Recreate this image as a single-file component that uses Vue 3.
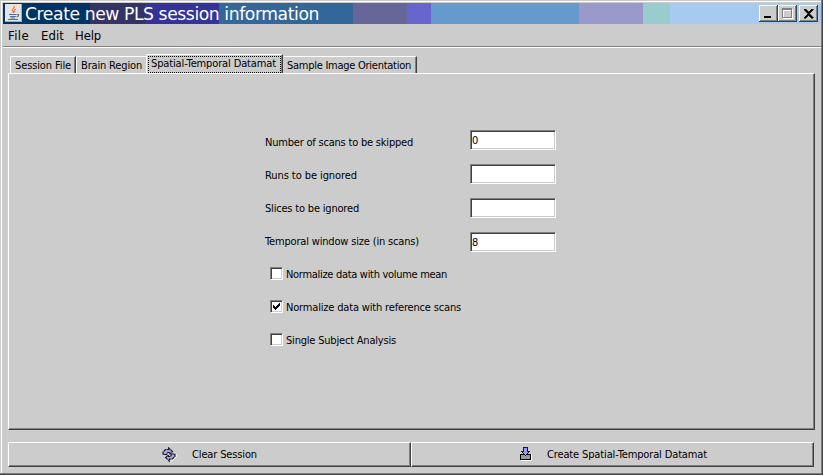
<script setup>
import { ref } from 'vue'

// Tracks a label out (or in) so that it fills the given width in pixels.
const vFit = {
  mounted(el, { value }) {
    const natural = el.getBoundingClientRect().width
    const count = el.textContent.length
    el.style.letterSpacing = `${(value - natural) / count}px`
  },
}

const menus = [
  { text: 'File', width: 21, cls: 'm-file' },
  { text: 'Edit', width: 23, cls: 'm-edit' },
  { text: 'Help', width: 26, cls: 'm-help' },
]
const tabs = [
  { text: 'Session File', width: 56, cls: 't-session' },
  { text: 'Brain Region', width: 61, cls: 't-brain' },
  { text: 'Spatial-Temporal Datamat', width: 125, cls: 't-datamat active' },
  { text: 'Sample Image Orientation', width: 124, cls: 't-sample' },
]
const fields = ref([
  { text: 'Number of scans to be skipped', width: 148, value: '0' },
  { text: 'Runs to be ignored', width: 92, value: '' },
  { text: 'Slices to be ignored', width: 94, value: '' },
  { text: 'Temporal window size (in scans)', width: 154, value: '8' },
])
const checks = ref([
  { text: 'Normalize data with volume mean', width: 161, on: false },
  { text: 'Normalize data with reference scans', width: 175, on: true },
  { text: 'Single Subject Analysis', width: 110, on: false },
])
</script>

<template>
  <div class="window">
    <header class="titlebar">
      <svg class="java" width="17" height="18" viewBox="0 0 17 18">
        <rect width="17" height="18" fill="#e4e4e2" />
        <path d="M0 17.5H16.5V0" fill="none" stroke="#a9a9a9" />
        <path d="M9.5 2C10 4 6.5 5 7.500 7L9 9M11 5C8.500 6 9 7 10 8" fill="none" stroke="#ef8035" stroke-width="1.300" />
        <path d="M4 10.500H11M5 12.500H11M5.500 14H10M11.500 10.500H13.500V12L11.500 13M3 15.500H13" fill="none" stroke="#536f9d" stroke-width="1.100" />
      </svg>
      <span v-fit="294" class="title">Create new PLS session information</span>
      <div class="controls">
        <button class="control">
          <svg width="15" height="13" viewBox="0 0 15 13" shape-rendering="crispEdges"><path d="M3 10h7v2H3z" fill="#000" /></svg>
        </button>
        <button class="control">
          <svg width="15" height="13" viewBox="0 0 15 13" shape-rendering="crispEdges">
            <path d="M3 3h10v10H3zM4 5v7h8V5z" fill="#fff" fill-rule="evenodd" />
            <path d="M2 2h10v10H2zM3 4v7h8V4z" fill="#808080" fill-rule="evenodd" />
          </svg>
        </button>
        <button class="control close">
          <svg width="15" height="13" viewBox="0 0 15 13" shape-rendering="crispEdges">
            <path d="M3 3h2v1h1v1h1v1h1V5h1V4h1V3h2v1h-1v1h-1v1H9v1H8v1h1v1h1v1h1v1h1v1h-2v-1H9v-1H8V9H7v1H6v1H5v1H3v-1h1v-1h1V9h1V8h1V7H6V6H5V5H4V4H3z" fill="#000" stroke="#000" stroke-width=".6" />
          </svg>
        </button>
      </div>
    </header>

    <nav class="menubar">
      <span v-for="m in menus" :key="m.text" class="menu" :class="m.cls"><span v-fit="m.width">{{ m.text }}</span></span>
    </nav>

    <main class="body">
      <div class="tabs">
        <div v-for="t in tabs" :key="t.text" class="tab" :class="t.cls">
          <div class="tab-label"><span v-fit="t.width">{{ t.text }}</span></div>
        </div>
      </div>
      <section class="panel">
        <div class="form">
          <div class="labels">
            <label v-for="f in fields" :key="f.text"><span v-fit="f.width">{{ f.text }}</span></label>
          </div>
          <div class="inputs">
            <input v-for="f in fields" :key="f.text" v-model="f.value" type="text" />
          </div>
        </div>
        <div class="checks">
          <label v-for="c in checks" :key="c.text" class="check">
            <span class="box">
              <svg v-if="c.on" width="9" height="9" viewBox="0 0 9 9" shape-rendering="crispEdges">
                <path d="M1 3h1v1h1v1h1V4h1V3h1V2h1V1h1v3H7v1H6v1H5v1H4v1H3V7H2V6H1z" fill="#000" />
              </svg>
            </span>
            <span v-fit="c.width" class="check-text">{{ c.text }}</span>
          </label>
        </div>
      </section>
      <footer class="actions">
        <button class="action clear">
          <svg class="clear-icon" width="15" height="16" viewBox="0 0 15 16">
            <path d="M8 15.500L14.200 10V7" stroke="#fff" fill="none" />
            <path d="M1 7.500V5L3.500 2.500H6.500V.8L10.500 4.500L8 6.800V5.500H6L4.500 7.500Z" fill="#a3a3dc" />
            <path d="M13 7V9.500L10.500 12H7.500V14.300L3.500 10.500L6.500 8V9.500H8.500L10 7Z" fill="#a3a3dc" />
            <path d="M4.500 7.500H1V5L3.500 2.500H6.500V.8L10.500 4.500L8 6.800V5.500H6ZM9.500 7H13V9.500L10.500 12H7.500V14.300L3.500 10.500L6.500 8V9.500H8.500Z" fill="none" stroke="#171724" stroke-width="1.100" stroke-dasharray="3 .5" />
          </svg>
          <span v-fit="65">Clear Session</span>
        </button>
        <button class="action create">
          <svg class="create-icon" width="12" height="14" viewBox="0 0 12 14" shape-rendering="crispEdges">
            <path d="M1 13h11V7h-1v6h-10v1h11V13z" fill="#fff" />
            <path d="M0 7h11v6H0z" fill="#000" />
            <path d="M1 8h9v4H1z" fill="#999" />
            <path d="M3 0h5v4h2v1H9v1H8v1H7v1H6v1H5V8H4V7H3V6H2V5H1V4h2z" fill="#18182a" />
            <path d="M4 1h3v4h1v1H7v1H6v1H5V7H4V6H3V5h1z" fill="#9999ff" />
          </svg>
          <span v-fit="160">Create Spatial-Temporal Datamat</span>
        </button>
      </footer>
    </main>
  </div>
</template>

<style>
body {
  margin: 0;
  background: #ccc;
}
</style>

<style scoped>
* {
  box-sizing: border-box;
}
.window {
  width: 823px;
  height: 475px;
  padding: 1px 0 0 1px;
  background: #ccc;
  border: 0 solid #404040;
  border-width: 0 1px 1px 0;
  box-shadow: inset -1px -1px #808080, inset 1px 1px #ccc, inset 2px 2px #fff;
  font: 11px/14px "DejaVu Sans Condensed", "DejaVu Sans", sans-serif;
  font-stretch: condensed;
  color: #000;
  white-space: nowrap;
  overflow: hidden;
}
.titlebar {
  display: flex;
  height: 21px;
  margin: 2px 1px 0 2px;
  padding: 0 3px 0 2px;
  background: linear-gradient(
    90deg,
    #003366 87px,
    #333366 87px 142px,
    #333399 142px 216px,
    #336699 216px 350px,
    #666699 350px 404px,
    #6666cc 404px 428px,
    #6699cc 428px 576px,
    #9999cc 576px 640px,
    #99cccc 640px 667px,
    #a6caf0 667px
  );
}
.java {
  margin-top: 1px;
  flex: none;
}
.title {
  margin-left: 3px;
  color: #fff;
  font-family: "DejaVu Sans", sans-serif;
  font-stretch: normal;
  font-size: 17.200px;
  line-height: 23px;
}
.controls {
  display: flex;
  margin-left: auto;
  padding-top: 2px;
}
.control {
  display: flex;
  align-items: flex-start;
  width: 19px;
  height: 17px;
  padding: 1px 0 0 1px;
  border: 0;
  background: #ccc;
  box-shadow: inset -1px -1px #404040, inset 1px 1px #fff, inset -2px -2px #808080;
}
.control svg {
  display: block;
  margin-left: 1px;
}
.close {
  margin-left: 2px;
}
.menubar {
  display: flex;
  height: 24px;
  margin: 0 1px 0 2px;
  padding-left: 5px;
  border-bottom: 1px solid #fff;
  box-shadow: inset 0 -1px #808080;
  font-size: 13px;
  line-height: 24px;
}
.m-file {
  width: 33px;
}
.m-edit {
  width: 34px;
}
.body {
  padding: 5px 0 0 7px;
}
.tabs {
  display: flex;
  align-items: flex-end;
  height: 20px;
  padding-left: 2px;
}
.tab {
  height: 17px;
  padding: 2px 0 0 5px;
  border-top: 1px solid #fff;
  border-left: 1px solid #fff;
  border-top-left-radius: 2px;
}
.t-session {
  width: 66px;
  padding-left: 4px;
  border-right: 1px solid #404040;
  box-shadow: inset -1px 0 #808080;
}
.t-brain {
  width: 70px;
  padding-left: 4px;
}
.t-datamat {
  width: 137px;
  height: 19px;
  padding: 1px 1px 0;
  border-right: 1px solid #404040;
  box-shadow: inset -1px 0 #808080;
}
.active .tab-label {
  width: 133px;
  height: 17px;
  padding-left: 2px;
  border: 1px dotted #000;
  line-height: 14px;
}
.t-sample {
  width: 134px;
  padding-left: 4px;
  border-left: 0;
  border-right: 1px solid #404040;
  box-shadow: inset -1px 0 #808080;
}
.panel {
  width: 807px;
  height: 357px;
  padding: 57px 0 0 256px;
  border: 1px solid;
  border-color: #fff #404040 #404040 #fff;
  box-shadow: inset -1px -1px #808080;
}
.form {
  display: flex;
  height: 136px;
}
.labels {
  display: flex;
  flex-direction: column;
  gap: 19px;
  width: 205px;
  padding-top: 5px;
}
.labels label {
  height: 14px;
}
.inputs {
  display: flex;
  flex-direction: column;
  gap: 14px;
  margin-top: -1px;
}
input {
  width: 86px;
  height: 20px;
  padding: 1px 0 0 1px;
  border: 1px solid;
  border-color: #808080 #fff #fff #808080;
  border-radius: 0;
  outline: 0;
  background: #fff;
  box-shadow: inset 1px 1px #404040, inset -1px -1px #ccc;
  font: inherit;
}
.checks {
  display: flex;
  flex-direction: column;
  gap: 19px;
  padding-left: 5px;
}
.check {
  display: flex;
  align-items: flex-start;
  gap: 3px;
  height: 14px;
}
.check-text {
  padding-top: 1px;
}
.box {
  flex: none;
  width: 13px;
  height: 13px;
  padding: 1px;
  border: 1px solid;
  border-color: #808080 #fff #fff #808080;
  background: #fff;
  box-shadow: inset 1px 1px #404040, inset -1px -1px #ccc;
}
.box svg {
  display: block;
}
.actions {
  display: flex;
  margin-top: 12px;
}
.action {
  display: flex;
  align-items: center;
  width: 403px;
  height: 25px;
  padding: 0;
  border: 1px solid;
  border-color: #fff #404040 #404040 #fff;
  background: #ccc;
  box-shadow: inset -1px -1px #808080;
  color: #000;
  font: inherit;
}
.clear {
  padding-left: 153px;
  gap: 15px;
}
.create {
  padding-left: 108px;
  gap: 15px;
}
.create-icon {
  margin-top: -1px;
}
</style>
